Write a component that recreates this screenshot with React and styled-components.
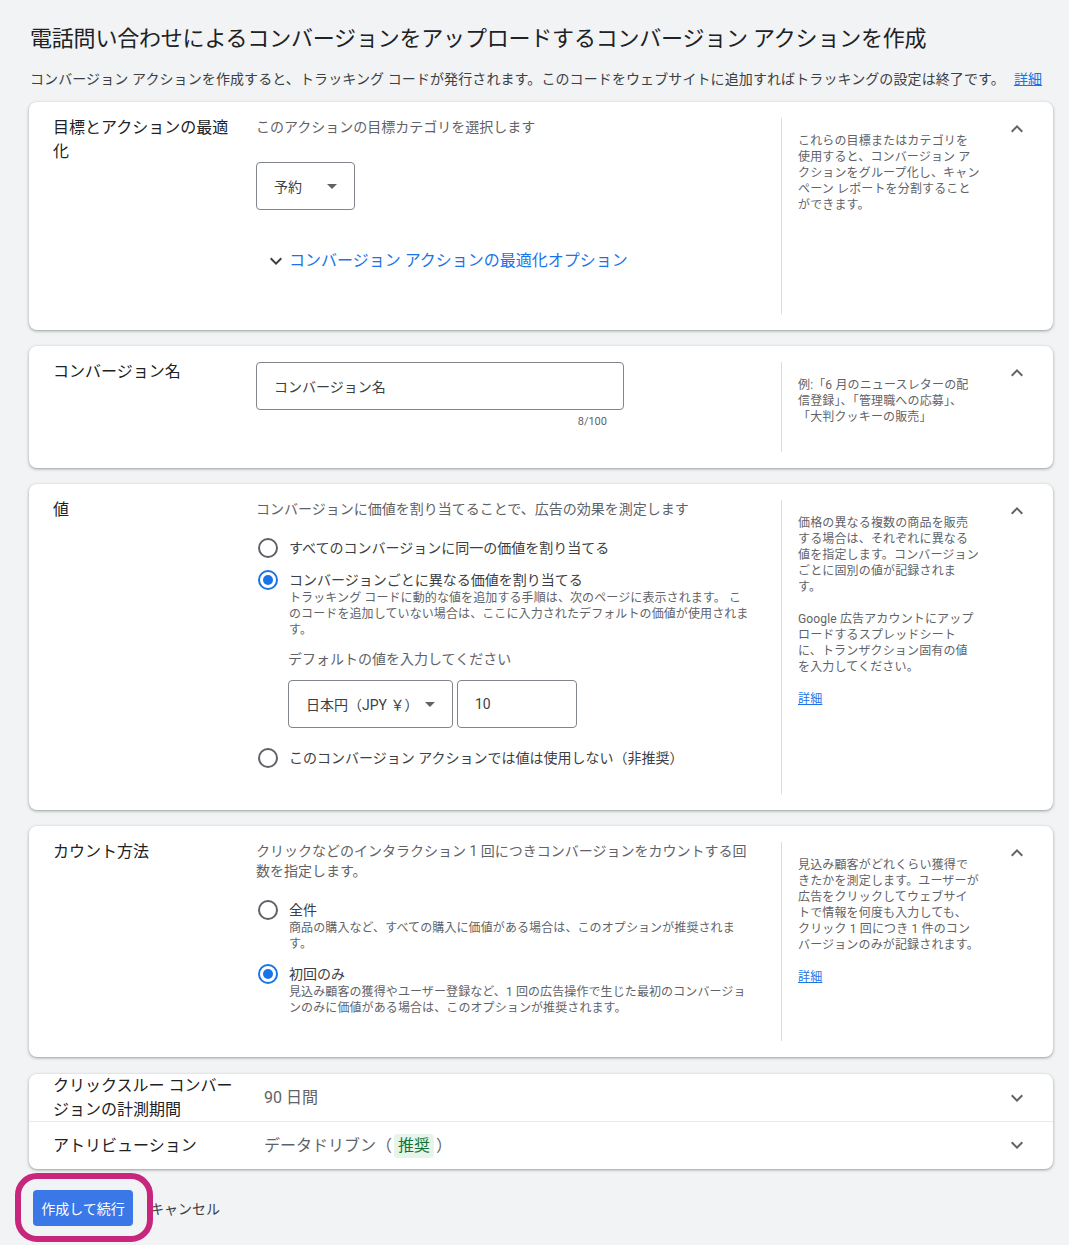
import React from "react";
import styled, { createGlobalStyle } from "styled-components";

const GlobalStyle = createGlobalStyle`
  body {
    margin: 0;
    background: #f1f3f4;
    font-family: Roboto, "Noto Sans CJK JP", "Noto Sans", sans-serif;
    color: #202124;
  }
`;

const Page = styled.div`
  padding: 25px 16px 0 29px;
  min-height: 1245px;
  box-sizing: border-box;
`;

const Title = styled.h1`
  margin: 0 0 0 1px;
  font-size: 22px;
  line-height: 28px;
  font-weight: 400;
  letter-spacing: -0.2px;
  color: #202124;
`;

const Intro = styled.p`
  margin: 16px 0 13px 1px;
  font-size: 14px;
  line-height: 20px;
  letter-spacing: 0.1px;
  color: #3c4043;
`;

const Link = styled.a`
  color: #1a73e8;
  text-decoration: underline;
  margin-left: ${props => props.gap || 0}px;
  font-size: ${props => props.size || 14}px;
`;

const Stack = styled.div`
  display: flex;
  flex-direction: column;
  gap: 16px;
`;

const Card = styled.section`
  display: grid;
  grid-template-columns: 203px 525px 1px 223px 24px;
  padding: 16px 0 16px 24px;
  background: #fff;
  border-radius: 8px;
  box-shadow: 0 1px 2px 0 rgba(60, 64, 67, 0.3), 0 1px 3px 1px rgba(60, 64, 67, 0.15);
`;

const Label = styled.div`
  margin-top: -2px;
  padding-right: 18px;
  font-size: 16px;
  line-height: 24px;
  color: #202124;
`;

const Content = styled.div`
  padding: 0 25px ${props => props.bottom || 24}px 0;
`;

const Divider = styled.div`
  background: #dadce0;
`;

const Help = styled.div`
  padding: 15px 8px 0 16px;
  font-size: 12px;
  line-height: 16px;
  letter-spacing: 0.15px;
  color: #5f6368;

  p {
    margin: 0 0 16px;
  }
`;

const IconBox = styled.div`
  width: 24px;
  height: 24px;
  margin-top: -1px;
  color: ${props => props.color || "#5f6368"};
`;

const Desc = styled.div`
  margin-top: -1px;
  font-size: 14px;
  line-height: 20px;
  color: #5f6368;
`;

const SelectBox = styled.div`
  display: flex;
  align-items: center;
  justify-content: space-between;
  box-sizing: border-box;
  width: ${props => props.width}px;
  height: 48px;
  margin-top: ${props => props.top || 0}px;
  padding: 0 10px 0 17px;
  border: 1px solid #80868b;
  border-radius: 4px;
  font-size: 14px;
  color: #3c4043;
`;

const TextBox = styled.div`
  display: flex;
  align-items: center;
  box-sizing: border-box;
  width: ${props => props.width}px;
  height: 48px;
  padding-left: 17px;
  border: 1px solid #80868b;
  border-radius: 4px;
  font-size: 14px;
  color: #3c4043;
`;

const Counter = styled.div`
  width: 367px;
  box-sizing: border-box;
  margin-top: 4px;
  padding-right: 16px;
  text-align: right;
  font-size: 11px;
  line-height: 16px;
  color: #5f6368;
`;

const ExpandLink = styled.div`
  display: flex;
  align-items: center;
  margin: 39px 0 17px 8px;
  gap: 1px;
  font-size: 16px;
  line-height: 24px;
  color: #1a73e8;
`;

const RadioGroup = styled.div`
  display: flex;
  flex-direction: column;
  margin-top: ${props => props.top || 0}px;
`;

const RadioRow = styled.div`
  display: flex;
  align-items: flex-start;
  margin-top: ${props => props.top || 0}px;
`;

const RadioCircle = styled.span`
  flex: none;
  box-sizing: border-box;
  width: 20px;
  height: 20px;
  margin: 0 11px 0 2px;
  border-radius: 50%;
  border: 2px solid ${props => (props.checked ? "#1a73e8" : "#5f6368")};
  display: flex;
  align-items: center;
  justify-content: center;

  &::after {
    content: "";
    display: ${props => (props.checked ? "block" : "none")};
    width: 10px;
    height: 10px;
    border-radius: 50%;
    background: #1a73e8;
  }
`;

const RadioText = styled.div`
  padding-right: 4px;
  font-size: 14px;
  line-height: 20px;
  color: #3c4043;
`;

const SubText = styled.div`
  font-size: 12px;
  line-height: 16px;
  letter-spacing: 0.1px;
  color: #5f6368;
`;

const Indented = styled.div`
  margin: ${props => props.top || 0}px 0 0 32px;
`;

const Prompt = styled.div`
  font-size: 14px;
  line-height: 20px;
  color: #5f6368;
`;

const ValueRow = styled.div`
  display: flex;
  gap: 4px;
  margin-top: 11px;
`;

const SummaryGroup = styled.div`
  margin-top: 17px;
  background: #fff;
  border-radius: 8px;
  box-shadow: 0 1px 2px 0 rgba(60, 64, 67, 0.3), 0 1px 3px 1px rgba(60, 64, 67, 0.15);
`;

const SummaryRow = styled.div`
  display: grid;
  grid-template-columns: 203px 1fr 24px;
  align-items: center;
  height: ${props => props.height}px;
  padding: 0 24px;
  border-top: ${props => (props.divided ? "1px solid #e8eaed" : "none")};
`;

const SummaryLabel = styled.div`
  padding-right: 18px;
  font-size: 16px;
  line-height: 24px;
  color: #202124;
`;

const SummaryValue = styled.div`
  margin-left: 8px;
  font-size: 16px;
  line-height: 24px;
  color: #5f6368;
`;

const Chip = styled.span`
  display: inline-block;
  padding: 0 4px;
  margin: 0 2px;
  border-radius: 4px;
  background: #e6f4ea;
  color: #137333;
`;

const Footer = styled.div`
  display: flex;
  align-items: center;
  gap: 17px;
  margin: 21px 0 0 4px;
`;

const ButtonWrap = styled.div`
  position: relative;
`;

const Ring = styled.div`
  position: absolute;
  top: -17px;
  left: -18px;
  right: -20px;
  bottom: -16px;
  border: 6px solid #c8267d;
  border-radius: 22px;
  pointer-events: none;
  z-index: 2;
`;

const PrimaryButton = styled.button`
  width: 100px;
  height: 36px;
  border: none;
  border-radius: 4px;
  background: #3b78e7;
  color: #fff;
  font-family: inherit;
  font-size: 14px;
`;

const CancelText = styled.span`
  font-size: 14px;
  color: #3c4043;
`;

const Chevron = ({ up, color }) => (
  <IconBox color={color}>
    <svg width="24" height="24" viewBox="0 0 24 24" fill="currentColor">
      {up ? (
        <path d="M12 8l-6 6 1.41 1.41L12 10.83l4.59 4.58L18 14z" />
      ) : (
        <path d="M16.59 8.59L12 13.17 7.41 8.59 6 10l6 6 6-6z" />
      )}
    </svg>
  </IconBox>
);

const DropArrow = () => (
  <svg width="24" height="24" viewBox="0 0 24 24" fill="#5f6368">
    <path d="M7 10l5 5 5-5z" />
  </svg>
);

const Radio = ({ checked, label, sub, top }) => (
  <RadioRow top={top}>
    <RadioCircle checked={checked} />
    <RadioText>
      {label}
      {sub && <SubText>{sub}</SubText>}
    </RadioText>
  </RadioRow>
);

// help text keeps the line breaks of the original panel
const Lines = ({ lines }) => (
  <p>
    {lines.map((line, i) => (
      <React.Fragment key={i}>
        {line}
        {i < lines.length - 1 && <br />}
      </React.Fragment>
    ))}
  </p>
);

const App = () => {
  return (
    <Page>
      <GlobalStyle />
      <Title>電話問い合わせによるコンバージョンをアップロードするコンバージョン アクションを作成</Title>
      <Intro>
        コンバージョン アクションを作成すると、トラッキング コードが発行されます。このコードをウェブサイトに追加すればトラッキングの設定は終了です。
        <Link gap={9}>詳細</Link>
      </Intro>

      <Stack>
        <Card>
          <Label>目標とアクションの最適化</Label>
          <Content bottom={0}>
            <Desc>このアクションの目標カテゴリを選択します</Desc>
            <SelectBox width={99} top={25}>
              予約
              <DropArrow />
            </SelectBox>
            <ExpandLink>
              <Chevron color="#3c4043" />
              コンバージョン アクションの最適化オプション
            </ExpandLink>
          </Content>
          <Divider />
          <Help>
            <Lines
              lines={[
                "これらの目標またはカテゴリを",
                "使用すると、コンバージョン ア",
                "クションをグループ化し、キャン",
                "ペーン レポートを分割すること",
                "ができます。",
              ]}
            />
          </Help>
          <Chevron up />
        </Card>

        <Card>
          <Label>コンバージョン名</Label>
          <Content bottom={22}>
            <TextBox width={368}>コンバージョン名</TextBox>
            <Counter>8/100</Counter>
          </Content>
          <Divider />
          <Help>
            <Lines
              lines={["例:「6 月のニュースレターの配", "信登録」、「管理職への応募」、", "「大判クッキーの販売」"]}
            />
          </Help>
          <Chevron up />
        </Card>

        <Card>
          <Label>値</Label>
          <Content bottom={26}>
            <Desc>コンバージョンに価値を割り当てることで、広告の効果を測定します</Desc>
            <RadioGroup top={19}>
              <Radio label="すべてのコンバージョンに同一の価値を割り当てる" />
              <Radio
                top={12}
                checked
                label="コンバージョンごとに異なる価値を割り当てる"
                sub="トラッキング コードに動的な値を追加する手順は、次のページに表示されます。 このコードを追加していない場合は、ここに入力されたデフォルトの価値が使用されます。"
              />
            </RadioGroup>
            <Indented top={11}>
              <Prompt>デフォルトの値を入力してください</Prompt>
              <ValueRow>
                <SelectBox width={165}>
                  日本円（JPY ￥）
                  <DropArrow />
                </SelectBox>
                <TextBox width={120}>10</TextBox>
              </ValueRow>
            </Indented>
            <RadioGroup top={20}>
              <Radio label="このコンバージョン アクションでは値は使用しない（非推奨）" />
            </RadioGroup>
          </Content>
          <Divider />
          <Help>
            <Lines
              lines={[
                "価格の異なる複数の商品を販売",
                "する場合は、それぞれに異なる",
                "値を指定します。コンバージョン",
                "ごとに固別の値が記録されま",
                "す。",
              ]}
            />
            <Lines
              lines={[
                "Google 広告アカウントにアップ",
                "ロードするスプレッドシート",
                "に、トランザクション固有の値",
                "を入力してください。",
              ]}
            />
            <Link size={12}>詳細</Link>
          </Help>
          <Chevron up />
        </Card>

        <Card>
          <Label>カウント方法</Label>
          <Content bottom={25}>
            <Desc>クリックなどのインタラクション 1 回につきコンバージョンをカウントする回数を指定します。</Desc>
            <RadioGroup top={19}>
              <Radio
                label="全件"
                sub="商品の購入など、すべての購入に価値がある場合は、このオプションが推奨されます。"
              />
              <Radio
                top={12}
                checked
                label="初回のみ"
                sub="見込み顧客の獲得やユーザー登録など、1 回の広告操作で生じた最初のコンバージョンのみに価値がある場合は、このオプションが推奨されます。"
              />
            </RadioGroup>
          </Content>
          <Divider />
          <Help>
            <Lines
              lines={[
                "見込み顧客がどれくらい獲得で",
                "きたかを測定します。ユーザーが",
                "広告をクリックしてウェブサイ",
                "トで情報を何度も入力しても、",
                "クリック 1 回につき 1 件のコン",
                "バージョンのみが記録されます。",
              ]}
            />
            <Link size={12}>詳細</Link>
          </Help>
          <Chevron up />
        </Card>
      </Stack>

      <SummaryGroup>
        <SummaryRow height={47}>
          <SummaryLabel>クリックスルー コンバージョンの計測期間</SummaryLabel>
          <SummaryValue>90 日間</SummaryValue>
          <Chevron />
        </SummaryRow>
        <SummaryRow height={47} divided>
          <SummaryLabel>アトリビューション</SummaryLabel>
          <SummaryValue>
            データドリブン（<Chip>推奨</Chip>）
          </SummaryValue>
          <Chevron />
        </SummaryRow>
      </SummaryGroup>

      <Footer>
        <ButtonWrap>
          <PrimaryButton>作成して続行</PrimaryButton>
          <Ring />
        </ButtonWrap>
        <CancelText>キャンセル</CancelText>
      </Footer>
    </Page>
  );
};

export default App;
